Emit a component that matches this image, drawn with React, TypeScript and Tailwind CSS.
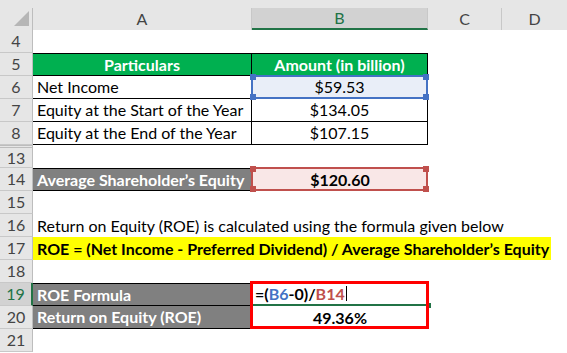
import type { ReactNode } from 'react'

// Excel-like sheet: ROE calculation
const COL_A = 'w-[219px] shrink-0'
const COL_B = 'w-[176px] shrink-0'

function RowHead({ num, active = false, hidden = false }: { num: number; active?: boolean; hidden?: boolean }) {
  return (
    <div
      className={
        'w-[33px] shrink-0 flex items-center justify-center border-b ' +
        (active
          ? 'bg-[#d2d2d2] text-[#217346] border-b-[#c8c8c8] border-r-2 border-r-[#217346]'
          : 'bg-[#e6e6e6] text-[#444] border-b-[#c8c8c8] border-r border-r-[#bdbdbd]') +
        (hidden ? ' border-t-[3px] border-t-[#bdbdbd] border-double' : '')
      }
    >
      {num}
    </div>
  )
}

function Row({ num, active, hidden, children }: { num: number; active?: boolean; hidden?: boolean; children?: ReactNode }) {
  return (
    <div className="flex h-[23px]">
      <RowHead num={num} active={active} hidden={hidden} />
      {children}
    </div>
  )
}

function Handles({ color }: { color: string }) {
  return (
    <>
      <span className={'absolute -left-[3px] -top-[3px] w-[6px] h-[6px] ' + color} />
      <span className={'absolute -right-[3px] -top-[3px] w-[6px] h-[6px] ' + color} />
      <span className={'absolute -left-[3px] -bottom-[3px] w-[6px] h-[6px] ' + color} />
      <span className={'absolute -right-[3px] -bottom-[3px] w-[6px] h-[6px] ' + color} />
    </>
  )
}

export default function App() {
  return (
    <div className="w-[567px] h-[353px] overflow-hidden bg-white font-['Lato',sans-serif] text-[16px] text-black leading-none">
      {/* Column headers */}
      <div className="flex h-[30px] bg-[#e6e6e6] pt-[8px]">
        <div className="w-[33px] shrink-0 border-r border-[#bdbdbd] flex items-end justify-end pr-[2px] pb-[3px]">
          <svg width="16" height="16" viewBox="0 0 16 16">
            <polygon points="15,0 15,15 0,15" fill="#b6b6b6" />
          </svg>
        </div>
        <div className={COL_A + ' flex items-center justify-center text-[#444] border-r border-[#c8c8c8]'}>A</div>
        <div className={COL_B + ' flex items-center justify-center bg-[#d2d2d2] text-[#217346] border-r border-[#c8c8c8] border-b-2 border-b-[#217346]'}>B</div>
        <div className="w-[74px] shrink-0 flex items-center justify-center text-[#444] border-r border-[#c8c8c8]">C</div>
        <div className="flex-1 flex items-center justify-center text-[#444]">D</div>
      </div>

      <Row num={4} />

      <Row num={5}>
        <div className={COL_A + ' bg-[#00b050] text-white font-bold flex items-center justify-center border-y border-r border-black'}>Particulars</div>
        <div className={COL_B + ' bg-[#00b050] text-white font-bold flex items-center justify-center border-y border-r border-black'}>Amount (in billion)</div>
      </Row>

      <Row num={6}>
        <div className={COL_A + ' flex items-center pl-[4px] border-b border-r border-black'}>Net Income</div>
        <div className={COL_B + ' relative bg-[#e9eef8] flex items-center justify-center border-b border-r border-black'}>
          $59.53
          <div className="absolute -left-[1px] -top-[1px] -right-[1px] -bottom-[1px] border-2 border-[#4472c4]">
            <Handles color="bg-[#4472c4]" />
          </div>
        </div>
      </Row>

      <Row num={7}>
        <div className={COL_A + ' flex items-center pl-[4px] border-b border-r border-black'}>Equity at the Start of the Year</div>
        <div className={COL_B + ' flex items-center justify-center border-b border-r border-black'}>$134.05</div>
      </Row>

      <Row num={8}>
        <div className={COL_A + ' flex items-center pl-[4px] border-b border-r border-black'}>Equity at the End of the Year</div>
        <div className={COL_B + ' flex items-center justify-center border-b border-r border-black'}>$107.15</div>
      </Row>

      <Row num={13} hidden />

      <Row num={14}>
        <div className={COL_A + ' bg-[#808080] text-white font-bold flex items-center pl-[4px] border-y border-black'}>Average Shareholder’s Equity</div>
        <div className={COL_B + ' relative bg-[#f9e7e7] font-bold flex items-center justify-center'}>
          $120.60
          <div className="absolute -left-[1px] -top-[1px] right-0 bottom-0 border-2 border-[#c0504d]">
            <Handles color="bg-[#c0504d]" />
          </div>
        </div>
      </Row>

      <Row num={15} />

      <Row num={16}>
        <div className={COL_A + ' flex items-center pl-[4px] whitespace-nowrap'}>Return on Equity (ROE) is calculated using the formula given below</div>
      </Row>

      <Row num={17}>
        <div className="w-[518px] shrink-0 bg-[#ffff00] font-bold flex items-center pl-[4px] whitespace-nowrap">
          ROE = (Net Income - Preferred Dividend) / Average Shareholder’s Equity
        </div>
      </Row>

      <Row num={18} />

      <Row num={19} active>
        <div className={COL_A + ' bg-[#808080] text-white font-bold flex items-center pl-[4px] border-y border-black'}>ROE Formula</div>
        <div className={COL_B + ' relative font-bold flex items-center pl-[3px] border-b-2 border-[#217346]'}>
          <span>=(</span>
          <span className="text-[#4472c4]">B6</span>
          <span>-0)/</span>
          <span className="text-[#c0504d]">B14</span>
          <span className="inline-block w-px h-[15px] bg-black ml-[1px]" />
          <span className="absolute -right-[3px] -bottom-[4px] w-[5px] h-[5px] bg-[#217346]" />
          <div className="absolute -left-[2px] -top-[2px] w-[179px] h-[48px] border-[3px] border-[#ff0000]" />
        </div>
      </Row>

      <Row num={20}>
        <div className={COL_A + ' bg-[#808080] text-white font-bold flex items-center pl-[4px] border-b border-black'}>Return on Equity (ROE)</div>
        <div className={COL_B + ' font-bold flex items-center justify-center'}>49.36%</div>
      </Row>

      <Row num={21} />
    </div>
  )
}
